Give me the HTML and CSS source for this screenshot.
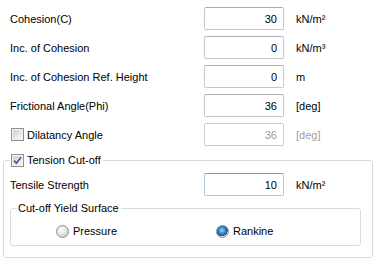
FILE: index.html
```html
<!DOCTYPE html>
<html lang="en">
<head>
    <meta charset="UTF-8">
    <title>Soil Properties</title>
    <link rel="stylesheet" href="styles.css">
</head>
<body>
    <div class="form">
        <div class="row">
            <span class="label">Cohesion(C)</span>
            <input class="field" type="text" value="30">
            <span class="unit">kN/m²</span>
        </div>
        <div class="row">
            <span class="label">Inc. of Cohesion</span>
            <input class="field" type="text" value="0">
            <span class="unit">kN/m³</span>
        </div>
        <div class="row">
            <span class="label">Inc. of Cohesion Ref. Height</span>
            <input class="field" type="text" value="0">
            <span class="unit">m</span>
        </div>
        <div class="row">
            <span class="label">Frictional Angle(Phi)</span>
            <input class="field" type="text" value="36">
            <span class="unit">[deg]</span>
        </div>
        <div class="row">
            <label class="check"><span class="box"></span>Dilatancy Angle</label>
            <input class="field" type="text" value="36" disabled>
            <span class="unit dim">[deg]</span>
        </div>
        <fieldset class="group">
            <legend>
                <label class="check">
                    <span class="box">
                        <svg width="11" height="11" viewBox="0 0 11 11"><path d="M2.2 5.6 L4.4 8.2 L9 2.2" fill="none" stroke="#3b5a9a" stroke-width="1.7"/></svg>
                    </span>Tension Cut-off
                </label>
            </legend>
            <div class="row">
                <span class="label">Tensile Strength</span>
                <input class="field focus" type="text" value="10">
                <span class="unit">kN/m²</span>
            </div>
            <fieldset class="group inner">
                <legend>Cut-off Yield Surface</legend>
                <div class="radios">
                    <label class="radio"><span class="dot"></span>Pressure</label>
                    <label class="radio"><span class="dot on"></span>Rankine</label>
                </div>
            </fieldset>
        </fieldset>
    </div>
</body>
</html>
```

FILE: styles.css
```css
* {
    margin: 0;
    padding: 0;
    box-sizing: border-box;
}
body {
    font-family: "Liberation Sans", Arial, sans-serif;
    font-size: 11px;
    color: #000;
    background: #fff;
}
.form {
    width: 380px;
    padding: 4px 0 0 3px;
}
.row {
    display: grid;
    grid-template-columns: 182px 80px auto;
    column-gap: 12px;
    align-items: center;
    height: 29px;
    padding-left: 7px;
}
.field {
    height: 23px;
    width: 80px;
    border: 1px solid #c4c7cc;
    border-top-color: #acafb5;
    border-radius: 2px;
    background: #fff;
    font: inherit;
    color: #000;
    text-align: right;
    padding-right: 6px;
    outline: none;
}
.field:disabled {
    color: #9a9a9a;
    border-color: #c9cbce;
}
.field.focus {
    border-color: #a9c6e4;
    border-top-color: #6d9ccc;
}
.unit.dim {
    color: #a0a0a0;
}
.check {
    display: flex;
    align-items: center;
}
.box {
    width: 13px;
    height: 13px;
    margin-left: 1px;
    margin-right: 3px;
    border: 1px solid #8e8f8f;
    background: linear-gradient(135deg, #c9ccd1 0%, #eef0f2 70%, #f8f8f8 100%);
    box-shadow: inset 0 0 0 1px #f4f4f4;
    display: flex;
    align-items: center;
    justify-content: center;
}
.group {
    width: 370px;
    min-width: 0;
    margin-top: 4px;
    border: 1px solid #d5dbe0;
    border-radius: 3px;
    padding: 3px 6px 11px 6px;
}
.group legend {
    line-height: 14px;
    padding: 0 2px 0 0;
}
.group .row {
    padding-left: 0;
}
.group.inner {
    width: 351px;
    margin-top: 2px;
    padding: 8px 6px 6px 6px;
}
.group.inner legend {
    padding: 0 2px 0 1px;
}
.radios {
    display: grid;
    grid-template-columns: 160px auto;
    padding-left: 39px;
    height: 16px;
    align-items: center;
}
.radio {
    display: flex;
    align-items: center;
}
.dot {
    width: 13px;
    height: 13px;
    margin-right: 4px;
    border-radius: 50%;
    border: 1px solid #8e8f8f;
    background: radial-gradient(circle at 40% 35%, #ffffff 0%, #e2e4e7 45%, #b9bec4 100%);
}
.dot.on {
    background: radial-gradient(circle at 45% 40%, #9fd8f6 0%, #3c8ccc 35%, #1d4f8c 62%, #e4e7ea 66%, #c7cbd0 100%);
}
```
